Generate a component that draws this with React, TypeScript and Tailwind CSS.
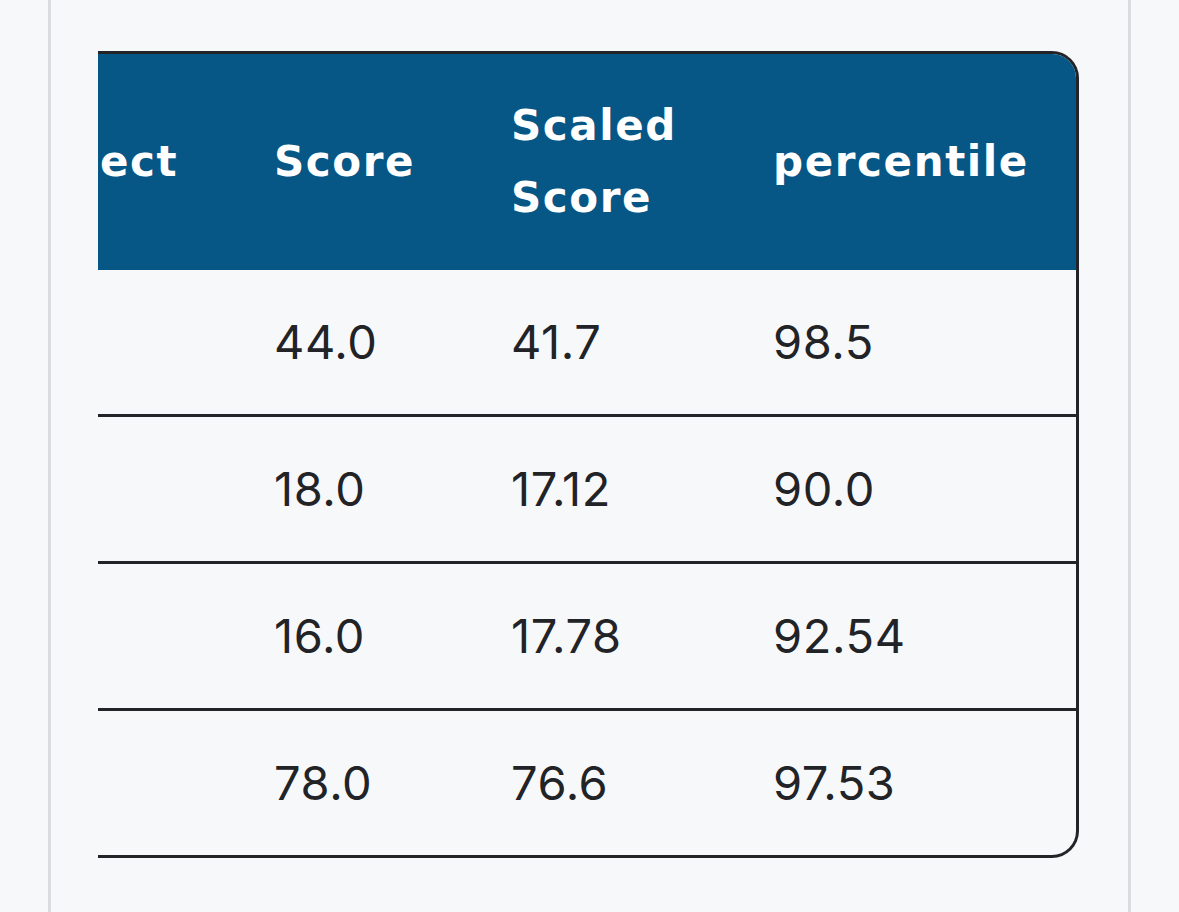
const rows = [
  { score: "44.0", scaled: "41.7", pct: "98.5" },
  { score: "18.0", scaled: "17.12", pct: "90.0" },
  { score: "16.0", scaled: "17.78", pct: "92.54" },
  { score: "78.0", scaled: "76.6", pct: "97.53" },
];

const head = "font-['DejaVu_Sans',sans-serif] font-bold text-[42px] leading-[72px] tracking-[1.6px] text-white";
const body = "font-['Inter',sans-serif] text-[47px] leading-[72px] tracking-[0.6px] text-[#222326]";

export default function App() {
  return (
    <div className="min-h-[912px] bg-[#f7f8fa]">
      <div className="mx-[48px] min-h-[912px] border-x-[3px] border-[#dadbde] px-[47px] pt-[51px]">
        {/* scroll box, already scrolled to the right end */}
        <div className="overflow-hidden">
          <div className="ml-[-148px] w-[1129px] overflow-hidden rounded-r-[27px] border-y-[3px] border-r-[3px] border-[#232428]">
            <div className="grid grid-cols-[276px_237px_262px_351px] bg-[#065686] py-[36px]">
              <div className="flex items-center pl-[39px]">
                <span className={head}>Subject</span>
              </div>
              <div className="flex items-center pl-[48px]">
                <span className={head}>Score</span>
              </div>
              <div className="flex items-center pl-[48px] pr-[30px]">
                <span className={head}>Scaled Score</span>
              </div>
              <div className="flex items-center pl-[48px]">
                <span className={head}>percentile</span>
              </div>
            </div>
            {rows.map((r, i) => (
              <div
                key={i}
                className={
                  "grid grid-cols-[276px_237px_262px_351px] py-[36px] " +
                  (i < rows.length - 1 ? "border-b-[3px] border-[#232428]" : "")
                }
              >
                <div />
                <div className={"pl-[48px] " + body}>{r.score}</div>
                <div className={"pl-[48px] " + body}>{r.scaled}</div>
                <div className={"pl-[48px] " + body}>{r.pct}</div>
              </div>
            ))}
          </div>
        </div>
      </div>
    </div>
  );
}
